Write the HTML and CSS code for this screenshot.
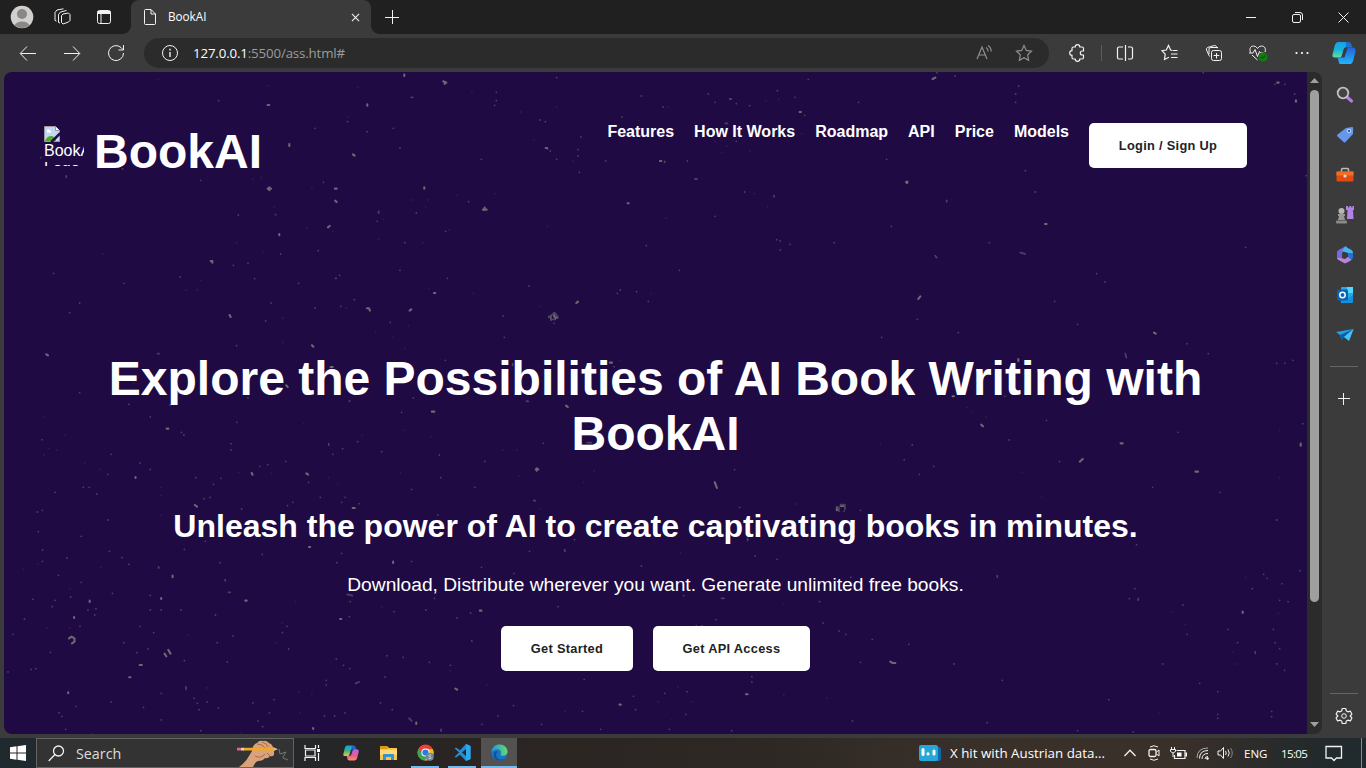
FILE: index.html
```html
<!DOCTYPE html>
<html lang="en">
<head>
<meta charset="utf-8">
<title>BookAI</title>
<link rel="stylesheet" href="styles.css">
</head>
<body>
<div class="screen">
  <div class="titlebar">
    <div class="cell w44"><svg width="24" height="24" viewBox="0 0 24 24"><circle cx="12" cy="12" r="11.3" fill="#d2d0ce"/><circle cx="12" cy="9" r="5" fill="#8a8886"/><path d="M4.500 20.300a8 6 0 0 1 15 0a11.300 11.300 0 0 1-15 0z" fill="#8a8886"/></svg></div>
    <div class="cell w36"><svg class="ln" width="18" height="18" viewBox="0 0 18 18"><path d="M8.500 7.500l1.500-1.500 5.500-1 1.500 1.500v6l-1.500 1.500-5.500 2-1.500-1.500zM5.500 14.500V6.500L7.500 4 13.500 2.500M5.500 14.500l1.500.5M2 12.500V4.500L4 2 10.500 .8M2 12.500l1.500.5"/></svg></div>
    <div class="cell w48"><svg class="ln" width="16" height="16" viewBox="0 0 16 16"><rect x="1.500" y="1.500" width="13" height="13" rx="2"/><path d="M1.500 3.500h13" stroke-width="3"/><path d="M5 5v9"/></svg></div>
    <div class="tab">
      <svg class="ln" width="14" height="18" viewBox="0 0 14 18"><path d="M1.500 2.500a1 1 0 0 1 1-1H8L12.500 6v9.500a1 1 0 0 1-1 1h-9a1 1 0 0 1-1-1zM8 1.500V6h4.500"/></svg>
      <span class="tab-name">BookAI</span>
      <svg class="ln" width="9" height="9" viewBox="0 0 10 10"><path d="M1 1l8 8M9 1l-8 8" stroke-width="1.200"/></svg>
    </div>
    <div class="cell w42"><svg class="ln" width="14" height="14" viewBox="0 0 14 14"><path d="M7.500 0v14M0 7.500h14" stroke-width="1"/></svg></div>
    <div class="grow"></div>
    <div class="cell w46"><svg class="ln" width="10" height="10" viewBox="0 0 10 10"><path d="M0 5.500h10"/></svg></div>
    <div class="cell w46"><svg class="ln" width="11" height="11" viewBox="0 0 11 11"><rect x=".5" y="2.500" width="8" height="8" rx="1.500"/><path d="M3 .5h5a2.500 2.500 0 0 1 2.500 2.500v5"/></svg></div>
    <div class="cell w46"><svg class="ln" width="11" height="11" viewBox="0 0 11 11"><path d="M.5 .5l10 10M10.500 .5l-10 10"/></svg></div>
  </div>

  <div class="toolbar">
    <div class="cell w44"><svg class="ln" width="18" height="16" viewBox="0 0 18 16"><path d="M17 8.500H1.500M8 1.500L1.200 8.500L8 15.500"/></svg></div>
    <div class="cell w44"><svg class="ln" width="18" height="16" viewBox="0 0 18 16"><path d="M1 8.500h15.500M10 1.500l6.800 7L10 15.500"/></svg></div>
    <div class="cell w44"><svg class="ln" width="18" height="18" viewBox="0 0 18 18"><path d="M16.500 9A7.500 7.500 0 1 1 14 3.500L16 5.500M16.500 1v5h-5"/></svg></div>
    <div class="address">
      <svg class="ln" width="18" height="18" viewBox="0 0 18 18"><circle cx="9" cy="9" r="7.500"/><path d="M9 8v5M9 4.800v1.600" stroke-width="1.400"/></svg>
      <span class="url"><b>127.0.0.1</b>:5500/ass.html#</span>
      <svg class="ln dim" width="18" height="18" viewBox="0 0 18 18"><path d="M2 15L7 3l5 12M4 11h6M11 3.500q2 1 2.200 4M13 1.500q3.200 2 3.200 6" stroke-width="1.200"/></svg>
      <svg class="ln dim" width="18" height="18" viewBox="0 0 18 18"><path d="M9 1.500l2.300 4.900 5.200.7-3.800 3.700.9 5.500L9 13.700l-4.600 2.600.9-5.500L1.500 7.100l5.200-.7z" stroke-width="1.200"/></svg>
    </div>
    <div class="cell w44"><svg class="ln" width="18" height="18" viewBox="0 0 18 18"><path d="M5.500 3H7.200a2.300 2.300 0 0 1 4.600 0H14q1.500 0 1.500 1.500V7h-1.200a2 2 0 0 0 0 4h1.200v2.500Q15.500 15 14 15h-2.200a2.300 2.300 0 0 1-4.600 0H5.500Q4 15 4 13.500V11.300a2.300 2.300 0 0 1 0-4.600V4.500Q4 3 5.500 3z" stroke-width="1.200"/></svg></div>
    <div class="vsep"></div>
    <div class="cell w46"><svg class="ln" width="18" height="18" viewBox="0 0 18 18"><path d="M7 3H3a1.500 1.500 0 0 0-1.500 1.500v9A1.500 1.500 0 0 0 3 15h4M9.500 1v16M12 3h3A1.500 1.500 0 0 1 16.500 4.500v9A1.500 1.500 0 0 1 15 15H12" stroke-width="1.200"/></svg></div>
    <div class="cell w44"><svg class="ln" width="18" height="18" viewBox="0 0 18 18"><path d="M11 6.300L9.600 6 7.500 1.500 5.300 6 1 6.700l3.200 3.500-.7 5.300L8 13.300M11.500 6.500h5M10 10h6.500M10 13.500h6.500" stroke-width="1.200"/></svg></div>
    <div class="cell w44"><svg class="ln" width="18" height="18" viewBox="0 0 18 18"><rect x="6.500" y="6.500" width="10" height="10" rx="2"/><path d="M11.500 9v5.500M8.700 11.500h5.600M4.500 12.500L1.500 6q-.5-2 1.300-2.600L9.500 1.500q1.500 0 2 1.200l.7 1.600M4 10V5q0-1.500 1.800-1.500H13"/></svg></div>
    <div class="cell w44"><svg class="ln" width="20" height="18" viewBox="0 0 20 18"><path d="M2.500 8.500C1 4 3 2 5.500 2Q8 2 9.500 4.500Q11 2 13.500 2C17 2 18 5 17 8M1 9h4l2-3.500 2.500 7 2-5 1 1.500h3M4 11l5.500 5"/><circle cx="15" cy="13" r="4.600" fill="#107c10" stroke="none"/><path d="M12.800 13l1.500 1.500 2.800-3" stroke="#062f06"/></svg></div>
    <div class="cell w44"><svg width="14" height="4" viewBox="0 0 14 4" fill="#fff"><circle cx="1.500" cy="2" r="1.100"/><circle cx="7" cy="2" r="1.100"/><circle cx="12.500" cy="2" r="1.100"/></svg></div>
    <div class="cell w40"><svg width="24" height="24" viewBox="0 0 26 26"><defs><linearGradient id="ca" x2="0" y2="1"><stop stop-color="#18a0e8"/><stop offset=".5" stop-color="#16b4d5"/><stop offset="1" stop-color="#61e0a0"/></linearGradient><linearGradient id="cb" x2="0" y2="1"><stop stop-color="#2360dc"/><stop offset="1" stop-color="#20b8fa"/></linearGradient></defs><path d="M3 5q1-4 4-4h8q3 0 3 3l-3 3q-2 0-2.500 2l-2 7q-.6 2-3 2H3q-3 0-2.500-3z" fill="url(#ca)"/><path d="M15 1h2q3.500 0 4 3l.8 3H15z" fill="#1a72d0"/><path d="M18 7h4q4 0 3.500 4l-2.500 10q-1 4-4 4H10q-3 0-3-4l-1-3h2.500q3 0 3.500-2.500l2-6.500q1-2 4-2z" fill="url(#cb)"/><path d="M14 7h3l-3.500 11H9.500q2 0 2.500-3z" fill="#343a40"/></svg></div>
  </div>

  <div class="main">
    <div class="page">
      <svg class="stars" viewBox="4 72 1303 662" aria-hidden="true">
        <g transform="translate(0 72) scale(.3333)">
          <path class="s1" d="M803 99h5M1102 97v4M868 216v6M1059 247l5 4M803 350h10M808 346v9M1005 350h5M1006 386l4 4M1273 346v4M984 466l5-4M838 486v4M632 567h5v5M689 729l3 6M1101 709h6l3 7M139 847l5 3M1213 8v4M1229 716l5-4M936 820l4 4M859 940l4 5M992 885h6M1302 663h4"/>
          <path class="s2" d="M656 86h0M1234 76h4M1043 149h0M1102 179h0M1180 169h0M945 169h0M199 312v4M602 325h0M970 331h0M1200 228h0M1136 418v5M1132 448h0M827 428h0M715 429h0M842 546h0M744 574h0M700 580h0M955 536h0M1019 610h0M1007 619h2M1200 595h0M1215 512h0M896 634h0M764 620h0M1063 683h0M1023 703h0M945 708h0M813 693h0M797 747h0M710 821h0M473 845h4M161 604h0M372 634h0M209 722h0M239 693h0M122 257h0M239 962h0M1240 978h0M1048 988h0M368 291h0M744 978h0M541 615h0M1249 423h0M1171 751h0"/>
          <path class="s3" d="M475 22h0M803 42h0M1073 46h0M1043 135h0M759 321h0M784 316h0M936 350h0M823 404h0M710 512h0M788 541h0M602 625h0M592 654h0M558 654h0M308 546h0M1136 502h0M1151 443h0M1269 512h0M1277 404h0M1284 384h0M1239 384h0M999 478h0M921 468h0M1288 649h0M1038 708h0M848 738h0M1127 781h0M1225 762h0M1180 796h0M848 811h0M1215 830h0M402 934h0M744 892h0"/>
        </g>
        <g transform="translate(440 72) scale(.3333)">
          <path class="s1" d="M10 28l9 4M14 32v4M129 413h11M134 407v7M409 693l5-4M327 735l6-3M342 724v8l5 5M352 735v2M333 740v3M345 742h0M510 872h6M563 394h3M317 228l5 1M660 267h4M1079 120h4"/>
          <path class="s2" d="M327 735l9-7 8-6 9 12M333 742h11M342 754h0M350 17h0M169 61h0M169 86h0M164 100h0M301 144h0M316 149h0M331 237h0M350 262h0M414 252h0M414 233h0M418 301h0M124 262h0M86 389h0M497 267h0M546 135h0M669 105h0M604 72h0M674 268v3M742 267h0M765 321h6M825 433h0M914 360h0M1002 371v3M825 91h0M805 66h0M869 81h5M889 95h0M929 101h0M1012 56h0M1065 76h0M1094 130h0M1256 91h0M889 208h0M856 154h6M1105 22h0M1021 507h0M1010 503h0M1050 517h0M1021 534h0M1183 512h0M619 521h0M718 595h0M590 659h0M541 654h0M532 664h0M625 688h0M267 642h0M22 619h0M17 478h0M189 732h0M193 796h0M16 865h0M218 876v4M260 988h5M423 195h0M522 884h0"/>
          <path class="s3" d="M242 120h0M350 105h0M282 203h0M164 365h0M52 370h0M399 267h0M596 145h0M684 105h0M929 237h0M943 365h0M983 404h0M678 438h0M100 664h0M301 703h0M322 463h0M28 473h0M633 664h0M860 222h0M825 208h0M845 242h0M1085 185h0M1016 81h0M978 86h0M96 61h0M541 865h0"/>
        </g>
        <g transform="translate(870 72) scale(.3333)">
          <path class="s1" d="M188 21l8-4M108 330h5M111 329v5M525 456h5M145 681l6-8M852 782l5 3M445 861v6M1222 32h4M1278 85v4M248 973h4"/>
          <path class="s2" d="M201 2h0M255 12h0M446 42h0M437 66h0M437 91h0M230 385v4M196 551l4 6M358 512h0M451 542l14 4M64 463h0M466 296h0M496 360h0M50 262h0M142 742h0M680 605h0M705 630h0M554 688h0M265 782h0M766 845l3 12M951 815h0M1015 845h0M1269 865h0M1245 874h0M1220 874h0M1245 37h0M1215 37h0M1274 66h0M1309 311h0M1127 526h0M405 973h0M35 796h0M1000 2h0M623 757h0"/>
        </g>
        <g transform="translate(0 400) scale(.4209 .3333)">
          <path class="s1" d="M1026 35h6M1345 17l4 4M1273 208h6M1275 205v7M396 86h4M598 219l2 5M728 220l4 4M322 231v3M463 315l5 5M838 324h5M734 441h3M934 485v4M410 527v5M583 602h3M808 657h3M176 651v3M164 715l6-5 7 5v10l-6 5M391 761l4 8M400 750l5 11M332 795h5M307 832h3M1082 866l4 3M1472 914h3M1140 632h4M989 968v4M744 984v3M162 877v3M213 602v4M383 594v3"/>
          <path class="s2" d="M825 583l12 4M832 605h0M972 955l6 8M442 861v7M1395 128h10M306 13h0M357 51h0M404 15h0M431 97h0M437 105h0M563 67h0M100 119h0M549 150h0M549 131h0M781 131v4M791 163h0M814 146h0M850 125h0M831 3h0M954 37h0M907 155h0M1044 165h0M1152 184h0M1047 233h0M1291 130h0M264 163h0M333 189h0M357 208h0M256 223h0M198 262h0M212 262h0M230 282h0M131 277h0M465 233h0M525 235h0M507 253h0M617 199h0M636 194h0M679 184h0M733 247h0M499 292h0M485 296h0M761 292h0M696 307h0M683 317h0M574 327h0M820 292h0M812 307h0M853 311h0M101 331h0M89 336h0M256 360h0M91 395h0M193 409h0M438 448h0M488 424h0M101 450h0M260 454h0M159 474h0M290 473h0M306 493h0M101 484h0M377 501v3M139 526h0M193 547h0M267 580h0M168 591h0M131 601h0M78 598h0M124 620h0M228 626h0M209 630h0M225 645h0M357 586h0M357 630h0M383 630h0M190 679h0M333 679h0M365 698h0M294 728h0M325 758h0M352 747h0M120 757h0M85 806h0M74 808h0M58 657h0M31 703h0M19 816h0M523 488h0M535 539v3M543 577h4M430 630h0M512 645h0M623 463h0M800 488h0M812 460h0M978 484h0M936 635h0M1032 595h0M830 650h0M1012 630h0M1118 639h0M1086 654h0M682 679h0M671 698h0M554 708h0M516 728h0M686 747h0M438 782h0M540 786h0M799 777h0M816 796h0M831 806h0M919 767h0M958 772h0M775 841h0M775 855h0M845 850l8-4M915 831h0M1020 787h0M1070 796h0M1121 723h0M383 880h0M264 906h0M341 922h0M461 895h0M469 910h0M492 906h0M473 929h0M519 924h0M651 899h0M601 909h0M640 939h0M613 963h0M624 980h0M383 960h0M477 992h0M140 938h0M147 949h0M156 988h0M181 919h0M904 909h0M820 939h0M771 948h0M795 948h0M932 929h0M1048 988v5M1183 948h0M1145 973h0M1221 520h0M1342 449v5M1524 498h0M1144 502h0M1326 620h0M1258 454h0M1388 838h0M1505 889h0M1510 929h0M1220 917h0M1287 973h0M1384 934h0M1427 988h0M1268 302h4M1365 419h0M1128 262h0M978 268h0M1040 345h0M1252 3h0"/>
          <path class="s3" d="M155 105h0M105 165h0M117 145h0M135 150h0M201 189h0M238 208h0M383 262h0M383 287h0M383 346h0M104 52h0M722 71h0M960 91h0M861 106h0M1024 110h0M567 218h0M645 220h0M780 233h0M802 253h0M951 218h0M1233 228h0M1194 150h0M1228 150h0M1412 213h0M1387 247h0M1284 326h0M166 566h0M90 493h0M56 508h0M112 684h0M166 684h0M240 502h0M702 605h0M907 620h0M671 669h0M656 728h0M446 705h0M492 864h0M741 882h0M710 875h0M1070 812h0M1157 855h0M1343 934h0M220 1000h0M713 939h0M571 1000h0"/>
        </g>
        <g transform="translate(650 400) scale(.4209 .3333)">
          <path class="s1" d="M787 74l4 5M1118 130h5M1021 185l7-8M1296 215h6M154 247l5 17M444 321v10M444 328h0M453 318h8M1408 635v4M571 785l5 4h7M228 883h4M1546 131v6"/>
          <path class="s2" d="M444 322h5v12M453 314h10v14M461 334h0M1160 595v5M1438 756v4M201 209h0M213 322h0M232 416v5M250 468h0M302 478h0M477 532h0M623 135h0M604 179h0M640 223h0M674 199h0M853 120h0M942 61h0M1254 97h0M973 184h0M1194 262h0M1354 277h0M1551 71h0M1489 360h0M1156 434h0M825 527v5M1152 566h0M1139 596h0M1458 523h0M1466 535h0M1501 551h0M1431 566h0M1516 605h0M1496 601h0M1544 512h0M1266 615h0M1276 703h0M1373 688h0M1481 688h0M1396 728h0M1485 728h0M1496 746h0M1218 792h0M1489 792h0M1508 811h0M1306 850h0M1349 875h0M1349 943h0M1349 955h0M1477 934h0M1477 950h0M1148 996h0M1090 899h0M837 841h0M801 968h0M722 792h0M615 733h0M500 787h0M528 718h0M465 703h0M449 693h0M411 669h0M403 605h0M170 595h6M80 587h0M157 659h0M110 678h0M124 678h0M242 830h0M242 846h0M88 875h0M35 880h0M85 943h0M46 988h0M481 963h0M194 992h0M1016 992h0M500 331h0"/>
          <path class="s3" d="M764 37h0M799 51h0M753 22h0M1496 91h0M884 217h0M931 292h0M547 130h0M346 312h0M73 459h0M318 610h0M318 885h0M66 860h0M20 905h0M1241 635h0M1272 674h0M1385 757h0M1493 640h0M1210 940h0M1415 532h0M1496 233h0M100 905h0M52 960h0M420 895h0M1395 792h0"/>
        </g>
      </svg>
      <header class="site-head">
        <div class="logo-alt">
          <svg width="16" height="16" viewBox="0 0 16 16"><path d="M.5 .5h11l4 4v11H.5z" fill="#c4d6f5" stroke="#9a9a9a"/><path d="M11.500 .5v4h4" fill="#fff" stroke="#9a9a9a"/><path d="M1 15q2-5 6-5 4 0 5 5z" fill="#4fa82e"/><path d="M3 5.500a1.500 1.500 0 0 1 3-1 1.500 1.500 0 0 1 1 2H3z" fill="#fff"/><path d="M16 7L7 16M16 8L8 16" stroke="#1f0a44" stroke-width="1.800"/></svg>
          <span>BookAI</span><span>Logo</span>
        </div>
        <h1 class="brand">BookAI</h1>
        <nav class="links">
          <a>Features</a><a>How It Works</a><a>Roadmap</a><a>API</a><a>Price</a><a>Models</a>
          <button class="btn login">Login / Sign Up</button>
        </nav>
      </header>
      <section class="hero">
        <h1>Explore the Possibilities of AI Book Writing with<br>BookAI</h1>
        <h2>Unleash the power of AI to create captivating books in minutes.</h2>
        <p>Download, Distribute wherever you want. Generate unlimited free books.</p>
        <div class="actions"><button class="btn start">Get Started</button><button class="btn api">Get API Access</button></div>
      </section>
    </div>
    <div class="scroll">
      <svg width="9" height="5" viewBox="0 0 9 5"><path d="M4.500 0L9 5H0z" fill="#9f9f9f"/></svg>
      <div class="thumb"></div>
      <div class="grow"></div>
      <svg width="9" height="5" viewBox="0 0 9 5"><path d="M4.500 5L9 0H0z" fill="#9f9f9f"/></svg>
    </div>
    <aside class="side">
      <div class="sc"><svg width="18" height="18" viewBox="0 0 18 18"><path d="M11.500 11.500l4 3.500" stroke="#b47be0" stroke-width="3.200" stroke-linecap="round"/><circle cx="7" cy="7" r="5.300" fill="#444" stroke="#c3c1bc" stroke-width="1.800"/></svg></div>
      <div class="sc"><svg width="18" height="18" viewBox="0 0 18 18"><path d="M10 2l6-1q1.200 0 1.200 1.200L17 8l-7.500 8q-1 1-2 0L1.500 10.500q-1-1 0-2z" fill="#6697ea"/><circle cx="13" cy="5" r="1.800" fill="#345cae" stroke="#c5dcff"/></svg></div>
      <div class="sc"><svg width="18" height="16" viewBox="0 0 18 16"><path d="M5.500 5V2.500q0-1 1-1h5q1 0 1 1V5" fill="none" stroke="#bdbab7" stroke-width="1.500"/><rect x=".5" y="4.500" width="17" height="10" rx="1.200" fill="#df4b13"/><path d="M.5 4.500h17v4H.5z" fill="#f46b25"/><circle cx="9" cy="9" r="1.600" fill="#ddd"/></svg></div>
      <div class="sc"><svg width="18" height="18" viewBox="0 0 18 18"><path d="M10 0h2v1.500h1.300V0h2v1.500h1.200V0H18v4h-1l.5 9H11l.5-9H10z" fill="#b083e5"/><circle cx="5.500" cy="5" r="3" fill="#b8b5b2"/><path d="M2 8h7v2H8l1 4H2l1-4H2z" fill="#9a9896"/><rect x="0" y="14.500" width="11" height="3" rx="1" fill="#8b8988"/></svg></div>
      <div class="sc"><svg width="18" height="18" viewBox="0 0 18 18"><path d="M9 .5L2.500 4Q1 5 1 7v5l5 1V8q0-2 2-3l3-1.500V.5z" fill="#756be0"/><path d="M9 .5l6.500 3.500Q17 5 17 7v2l-5-2-6-2z" fill="#42b6ed"/><path d="M17 7v4q0 2-1.500 3L11 17l-2-3 3-3V7z" fill="#2870d8"/><path d="M1 12q0 1 1.500 2L9 17.500l6.500-3.500L12 11l-3 2-4-1z" fill="#bc83d6"/></svg></div>
      <div class="sc"><svg width="18" height="18" viewBox="0 0 18 18"><rect x="5" y="1" width="12" height="15" rx="1" fill="#28a8ea"/><path d="M11 1h6v6h-6z" fill="#50d9ff"/><path d="M4 9l7 4 6-4v7q0 1-1 1H5z" fill="#1490df"/><rect x="1" y="3.500" width="11" height="11" rx="1" fill="#0364b8"/><circle cx="6.500" cy="9" r="2.700" fill="none" stroke="#fff" stroke-width="1.500"/></svg></div>
      <div class="sc"><svg width="18" height="14" viewBox="0 0 18 14"><path d="M0 4L17.500 1 13 12 8 9 5.500 12 4 7z" fill="#27a0e8"/><path d="M17.500 1L4 7l1.500 5L8 9z" fill="#075ea9"/><path d="M17.500 1L8 9l5 4z" fill="#41c4f4"/></svg></div>
      <div class="rule"></div>
      <div class="sc add"><svg class="ln" width="12" height="12" viewBox="0 0 12 12"><path d="M5.500 0v12M0 5.500h12"/></svg></div>
      <div class="grow"></div>
      <div class="rule"></div>
      <div class="sc gear"><svg class="ln" width="18" height="18" viewBox="0 0 18 18"><path d="M7.300 1.500h3.400l.7 2.500 1.500.8 2.500-.6 1.500 3-1.700 1.800 1.700 1.900-1.500 3-2.500-.7-1.500.9-.7 2.400H7.300l-.7-2.400-1.500-.9-2.500.7-1.500-3L2.800 9 1.100 7.200l1.500-3 2.500.6L6.600 4z" stroke-width="1.200" stroke-linejoin="round"/><circle cx="9" cy="9" r="2.300"/></svg></div>
    </aside>
  </div>

  <footer class="taskbar">
    <div class="cell w36"><svg width="16" height="16" viewBox="0 0 16 16" fill="#fff"><path d="M0 2.300L6.500 1.300V7.500H0zM7.500 1.200L16 0v7.500H7.500zM0 8.500h6.500v6.200L0 13.800zM7.500 8.500H16V16l-8.500-1.200z"/></svg></div>
    <div class="search">
      <svg class="ln" width="17" height="17" viewBox="0 0 17 17"><circle cx="10.500" cy="6" r="5" stroke-width="1.300"/><path d="M7 9.500L.7 16" stroke-width="1.300"/></svg>
      <span>Search</span>
      <svg class="hand" width="53" height="28" viewBox="0 0 53 28"><path d="M2 28Q9 23 12 17L15 12Q15 6 20 4q2-3 6-2 3-1 6 2 3 1 4 4l4 2-3 2v4q-2 2-4 1-2 3-5 2-2 3-7 3-3 1-5 6z" fill="#d9a27d"/><path d="M20 5q6 0 8 4M25 3q5 1 6 5M18 17q6 3 10-2M30 14l3 3" stroke="#a96b4b" fill="none"/><path d="M6 8.800h31v2.700H6z" fill="#f1aa27"/><path d="M37 8.800l4 1.400-4 1.300z" fill="#d8c09b"/><rect x="0" y="8.800" width="4" height="2.700" fill="#dc6d78"/><rect x="4" y="8.800" width="3" height="2.700" fill="#d5d5d5"/><path d="M42 10l1 5 6-2-3 5q-1 2 3 2l2 1" stroke="#74777c" fill="none"/></svg>
    </div>
    <div class="cell w36"><svg class="ln" width="17" height="16" viewBox="0 0 17 16"><path d="M1 0v3.500h10.500V0M1.500 5h9.500v6H1.500zM1 16v-3.500h10.500V16M14.500 0v3M14.500 8v8" stroke-width="1.200"/><rect x="13" y="4" width="3" height="3" fill="#fff" stroke="none"/></svg></div>
    <div class="cell w42"><svg width="16" height="16" viewBox="0 0 26 26"><defs><linearGradient id="cc" x2="0" y2="1"><stop stop-color="#189de9"/><stop offset=".5" stop-color="#36b783"/><stop offset="1" stop-color="#f5c33a"/></linearGradient><linearGradient id="cd" x2="0" y2="1"><stop stop-color="#ac68e8"/><stop offset=".6" stop-color="#ed5b91"/><stop offset="1" stop-color="#f79363"/></linearGradient></defs><path d="M3 5q1-4 4-4h8q3 0 3 3l-3 3q-2 0-2.500 2l-2 7q-.6 2-3 2H3q-3 0-2.500-3z" fill="url(#cc)"/><path d="M14 1h3q3.500 0 4 3l.8 3H14z" fill="#2164c2"/><path d="M18 7h4q4 0 3.500 4l-2.500 10q-1 4-4 4H10q-3 0-3-4l-1-3h2.500q3 0 3.500-2.500l2-6.500q1-2 4-2z" fill="url(#cd)"/><path d="M14 7h2.500L13 17h-2.500z" fill="#363038"/></svg></div>
    <div class="cell w32"><svg width="17" height="16" viewBox="0 0 17 16"><path d="M0 1h7l2 2h8v12H0z" fill="#f7c64a"/><path d="M0 1h7l1 3H0z" fill="#dd9b15"/><path d="M0 5h17v5H0z" fill="#ffdb75"/><path d="M3 15V9h11v6h-3v-3H6v3z" fill="#3b91cf"/></svg></div>
    <div class="cell app chrome"><svg width="17" height="17" viewBox="0 0 18 18"><circle cx="9" cy="9" r="8.500" fill="#ea4335"/><path d="M1.500 5A8.500 8.500 0 0 0 8 17.500L12.500 11 5.500 11z" fill="#34a853"/><path d="M9 5.500h7.800A8.500 8.500 0 0 1 8 17.500l4.500-7z" fill="#fbbc04"/><circle cx="9" cy="9" r="4.300" fill="#fff"/><circle cx="9" cy="9" r="3.300" fill="#2977e8"/><circle cx="13.500" cy="13.500" r="4.300" fill="#718797"/><path d="M15 11.700q-2.500-.8-2.700.6 0 1 1.300 1.200 1.500.3 1.300 1.400-.5 1-2.800.4" stroke="#c3d0d8" fill="none"/></svg></div>
    <div class="cell app code"><svg width="17" height="17" viewBox="0 0 17 17"><path d="M12 0l4.500 2v13L12 17 6 10.700 2 13.500.5 12.700 5 8.500.5 4.300 2 3.500l4 2.800zM12 5L8 8.500l4 3.500z" fill="#238ed7" fill-rule="evenodd"/><path d="M12 0l4.500 2v13L12 17z" fill="#2aa9ed"/></svg></div>
    <div class="cell app edge"><svg width="17" height="17" viewBox="0 0 18 18"><defs><linearGradient id="ed" x1="0" x2="1"><stop stop-color="#2694d5"/><stop offset="1" stop-color="#65dc6d"/></linearGradient></defs><circle cx="9" cy="9" r="8.500" fill="#1776c6"/><path d="M.5 8.500C1 3 5 .5 9 .5c5 0 8.500 3.500 8.500 7.500 0 3-2.500 4.500-5 4.500-2 0-3-.7-2.300-1.700C12 7 7 2.500 .5 8.500z" fill="url(#ed)"/><path d="M7 8q-3 3-.5 6.500T15 15.500Q12 17.800 8 17.500 3 16 3 11q.5-4 4-3z" fill="#104f9d"/></svg></div>
    <div class="grow"></div>
    <div class="cell w24"><svg width="22" height="16" viewBox="0 0 22 16"><rect x="10" y="2" width="12" height="14" rx="2" fill="#1167a7"/><rect x="0" y="0" width="19" height="16" rx="2" fill="#27a7d6"/><path d="M4 4.500v5M9 8.700v.3M15 6v3" stroke="#fff" stroke-width="3" stroke-linecap="round"/></svg></div>
    <span class="news">X hit with Austrian data...</span>
    <div class="cell w24"><svg class="ln" width="12" height="8" viewBox="0 0 12 8"><path d="M.5 7L6 1.200 11.500 7" stroke-width="1.300"/></svg></div>
    <div class="cell w24"><svg class="ln" width="12" height="16" viewBox="0 0 12 16"><rect x="1" y="4.500" width="7" height="7" rx="1.500" stroke-width="1.300"/><path d="M8.500 7l2.500-2v6L8.500 9M2 2q4-2.500 8 0M2 14q4 2.500 8 0"/></svg></div>
    <div class="cell w25"><svg class="ln" width="17" height="13" viewBox="0 0 17 13"><path d="M6.500 3.500h8.500v8h-10.500V8" stroke-width="1.200"/><path d="M7 5.500h4.500v4H7zM15.500 5.500h1.500v4h-1.500z" fill="#fff" stroke="none"/><path d="M1.500 0v2M4.500 0v2M.5 2.500h5v2q-2.500 3-5 0zM3 6v4"/></svg></div>
    <div class="cell w24"><svg class="ln" width="14" height="14" viewBox="0 0 14 14"><path d="M1 12Q1 2 12 2" stroke="#aaa"/><path d="M3.500 12.500q0-8 8.500-8M6 13q0-5.500 6-5.500M9 13q0-2.500 3-2.500"/><circle cx="11.500" cy="12.500" r="1.200" fill="#fff" stroke="none"/></svg></div>
    <div class="cell w21"><svg class="ln" width="17" height="14" viewBox="0 0 17 14"><path d="M1 5h2.500L6.500 1.500v11L3.500 9H1zM8.500 5q1.500 2 0 4M11 3.500q2.500 3.500 0 7"/><path d="M13.500 2q3.500 5 0 10" stroke="#888"/></svg></div>
    <span class="tray lang">ENG</span>
    <span class="tray time">15:05</span>
    <svg class="ln note" width="18" height="17" viewBox="0 0 18 17"><path d="M1 1.500h15.500v11.500h-5L9 15.500 6.500 13H1z" stroke-width="1.300"/></svg>
    <div class="peek"></div>
  </footer>
</div>
</body>
</html>
```
FILE: styles.css
```css
* { box-sizing: border-box; }
body { margin: 0; background: #3b3b3b; overflow: hidden; }
.screen { width: 1366px; height: 768px; display: flex; flex-direction: column; font-family: "Open Sans", "Noto Sans", sans-serif; color: #fff; }
svg { flex: none; display: block; }
.ln { fill: none; stroke: #f2f2f2; stroke-width: 1; }
.dim { stroke: #8f8f8f; }
.grow { flex: 1; }
.cell { display: flex; align-items: center; justify-content: center; flex: none; height: 100%; }
.w21 { width: 21px; } .w24 { width: 24px; } .w25 { width: 25px; } .w32 { width: 32px; }
.w36 { width: 36px; } .w40 { width: 40px; } .w42 { width: 42px; } .w44 { width: 44px; } .w46 { width: 46px; } .w48 { width: 48px; }

.titlebar { height: 34px; flex: none; display: flex; background: #202020; }
.tab { position: relative; width: 240px; margin-left: 3px; background: #3b3b3b; border-radius: 8px 8px 0 0; display: flex; align-items: center; padding: 0 11px 0 12px; }
.tab::before, .tab::after { content: ""; position: absolute; bottom: 0; width: 8px; height: 8px; }
.tab::before { left: -8px; background: radial-gradient(circle at 0 0, #202020 7.5px, #3b3b3b 8px); }
.tab::after { right: -8px; background: radial-gradient(circle at 100% 0, #202020 7.5px, #3b3b3b 8px); }
.tab-name { flex: 1; font-size: 11.7px; margin: -2px 0 0 11px; }

.toolbar { height: 38px; flex: none; display: flex; padding-left: 6px; background: #3b3b3b; }
.address { flex: none; width: 905px; height: 30px; margin: 4px 6px 0; border-radius: 15px; background: #2b2b2b; display: flex; align-items: center; padding: 0 16px 0 17px; gap: 22px; }
.url { flex: 1; margin-left: -8px; font-size: 13.3px; letter-spacing: -.15px; color: #9b9b9b; }
.url b { color: #fff; font-weight: 400; }
.vsep { width: 1px; height: 16px; margin: 11px 0 0 2px; background: #5d5d5d; }

.main { height: 666px; flex: none; display: flex; padding: 0 0 4px 4px; }
.page { position: relative; width: 1303px; height: 662px; background: #1f0a44; border-radius: 8px 0 0 8px; overflow: hidden; font-family: "Liberation Sans", Arial, sans-serif; padding: 51px 0 0; }
.stars { position: absolute; inset: 0; width: 1303px; height: 662px; }
.stars path { fill: none; stroke-linecap: round; stroke-linejoin: round; vector-effect: non-scaling-stroke; }
.s1 { stroke: #6d6973; stroke-width: 2.1px; }
.s2 { stroke: #4b415c; stroke-width: 1.8px; }
.s3 { stroke: #2f1e4d; stroke-width: 1.8px; }
.site-head { position: relative; height: 57px; display: flex; align-items: flex-start; padding: 0 60px 0 40px; }
.logo-alt { width: 40px; height: 40px; margin-top: 3px; overflow: hidden; font-size: 16px; line-height: 18px; }
.logo-alt span { display: block; }
.brand { margin: 1px 0 0 10px; font-size: 48px; line-height: 55px; flex: 1; }
.links { display: flex; gap: 20px; font-size: 16px; font-weight: 700; line-height: 18px; }
.links a { white-space: nowrap; }
.btn { height: 45px; padding: 0; border: 0; border-radius: 5px; background: #fff; color: #222; font: 700 12.8px "Liberation Sans", Arial, sans-serif; letter-spacing: .3px; }
.login { width: 158px; }
.hero { position: relative; margin-top: 171px; text-align: center; }
.hero h1 { margin: 0; font-size: 48px; line-height: 55px; white-space: nowrap; }
.hero h2 { margin: 47px 0 0; font-size: 32px; line-height: 37px; white-space: nowrap; }
.hero p { margin: 29px 0 0; font-size: 19.2px; line-height: 22px; }
.actions { display: flex; justify-content: center; gap: 20px; margin-top: 30px; }
.start { width: 132px; }
.api { width: 157px; }

.scroll { width: 15px; height: 662px; background: #2b2b2b; border-radius: 0 8px 8px 0; display: flex; flex-direction: column; align-items: center; padding: 6px 0 7px; }
.thumb { width: 9px; height: 512px; margin-top: 7px; border-radius: 5px; background: #9f9f9f; }
.side { width: 44px; height: 666px; display: flex; flex-direction: column; align-items: center; padding-top: 2px; }
.sc { height: 40px; display: flex; align-items: center; justify-content: center; padding: 1px 0 0 1px; }
.rule { width: 28px; height: 1px; background: #666; margin-top: 12px; }
.add { height: 64px; padding: 0; }
.gear { height: 44px; padding: 0; }

.taskbar { height: 30px; flex: none; display: flex; align-items: center; background: linear-gradient(90deg, #202a2e 0, #242729 20%, #2a2422 35%, #2d2824 55%, #39302a 72%, #3a302a 86%, #252a2b 95%, #202a2e 100%); }
.search { width: 258px; height: 30px; border: 1px solid #646464; background: #333; display: flex; align-items: center; padding-left: 11px; font-size: 14.3px; }
.search span { flex: 1; margin-left: 11px; color: #ddd; }
.hand { margin-right: 3px; }
.app { border-bottom: 2px solid #76b9ed; }
.chrome, .code { width: 28px; }
.chrome { margin-left: 7px; }
.code { margin: 0 5px 0 9px; }
.edge { width: 36px; background: #545251; }
.news { flex: none; width: 176px; padding-left: 8px; font-size: 13.35px; white-space: nowrap; }
.tray { flex: none; font-size: 11.5px; white-space: nowrap; }
.lang { width: 45px; padding-left: 8px; }
.time { width: 44px; letter-spacing: -.6px; }
.note { margin-right: 18px; }
.peek { width: 5px; height: 30px; border-left: 1px solid #888; }
```
